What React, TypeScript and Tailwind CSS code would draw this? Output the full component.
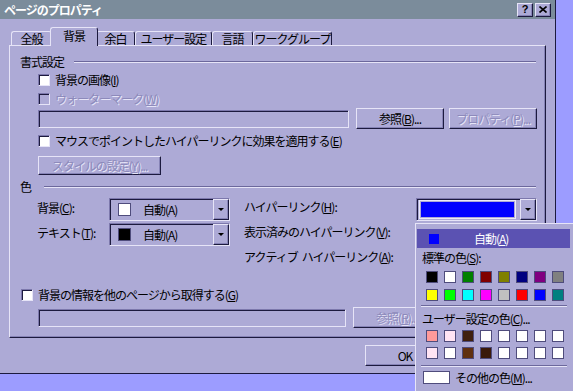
import React from 'react';

const raised =
  'border border-t-[#e6e4f7] border-l-[#e6e4f7] border-b-[#1c1a3e] border-r-[#1c1a3e] shadow-[inset_-1px_-1px_0_#8683b6]';
const sunken =
  'border border-t-[#7c78ac] border-l-[#7c78ac] border-b-[#e6e4f7] border-r-[#e6e4f7] shadow-[inset_1px_1px_0_#1c1a3e]';
const dimText = 'text-[#8d8abb] [text-shadow:1px_1px_0_#e6e4f7]';
const etched = 'h-[2px] border-t border-t-[#6c689c] border-b border-b-[#e6e4f7]';

const U = ({ c }: { c: string }) => <span className="underline underline-offset-[1px]">{c}</span>;

const Check = ({ disabled }: { disabled?: boolean }) => (
  <span className={`block w-[12px] h-[12px] shrink-0 ${sunken} ${disabled ? 'bg-[#adaad6]' : 'bg-white'}`} />
);

const Btn = ({ className, disabled, children }: { className: string; disabled?: boolean; children: React.ReactNode }) => (
  <div className={`flex items-center justify-center shrink-0 ${raised} ${disabled ? dimText : ''} ${className}`}>
    {children}
  </div>
);

const Tab = ({ className, children }: { className: string; children: React.ReactNode }) => (
  <div
    className={`h-[14px] flex items-center justify-center border-t border-l border-r border-t-[#e6e4f7] border-l-[#e6e4f7] border-r-[#1c1a3e] rounded-t-[3px] ${className}`}
  >
    {children}
  </div>
);

const Combo = ({ className, children }: { className: string; children: React.ReactNode }) => (
  <div className={`flex h-[23px] shrink-0 ${sunken} ${className}`}>
    <div className="flex-1 flex items-center">{children}</div>
    <div className={`w-[16px] flex items-center justify-center ${raised}`}>
      <span className="block w-0 h-0 border-l-[3px] border-r-[3px] border-t-[3px] border-l-transparent border-r-transparent border-t-black" />
    </div>
  </div>
);

const Swatch = ({ color }: { color: string }) => (
  <span className="block w-[12px] h-[12px] border border-[#4f4c7c]" style={{ background: color }} />
);

const standard = [
  '#000000', '#ffffff', '#008000', '#800000', '#808000', '#000080', '#800080', '#808080',
  '#ffff00', '#00ff00', '#00ffff', '#ff00ff', '#c0c0c0', '#ff0000', '#0000ff', '#008080',
];
const custom = [
  '#ff9a9a', '#ffe4f4', '#40200e', '#ffffff', '#ffffff', '#ffffff', '#ffffff', '#ffffff',
  '#ffe4f4', '#ffffff', '#603010', '#3a1a0a', '#ffffff', '#ffffff', '#ffffff', '#ffffff',
];

export default function App() {
  return (
    <div className="relative w-[573px] h-[391px] overflow-hidden bg-[#9c9cff] text-[12px] leading-none tracking-[-1px] text-black font-['Noto_Sans_CJK_JP','Noto_Sans',sans-serif]">
      {/* dialog */}
      <div className="w-[556px] h-[374px] flex flex-col bg-[#adaad6] border-r border-b border-r-[#1c1a3e] border-b-[#1c1a3e]">
        <div className="h-[19px] shrink-0 bg-[#7b8c9b] flex items-center justify-between pl-[4px] pr-[4px]">
          <span className="text-white font-bold">ページのプロパティ</span>
          <div className="flex gap-[2px]">
            <div className={`w-[16px] h-[14px] bg-[#adaad6] flex items-center justify-center font-bold text-[11px] tracking-normal font-['Liberation_Sans',sans-serif] ${raised}`}>
              ?
            </div>
            <div className={`w-[16px] h-[14px] bg-[#adaad6] flex items-center justify-center ${raised}`}>
              <svg width="8" height="7" viewBox="0 0 8 7">
                <path d="M0.5 0.5 L7.5 6.5 M7.5 0.5 L0.5 6.5" stroke="#000" strokeWidth="1.6" />
              </svg>
            </div>
          </div>
        </div>

        {/* tabs */}
        <div className="mt-[8px] h-[18px] shrink-0 flex items-end pl-[11px]">
          <Tab className="w-[41px]">全般</Tab>
          <div className="relative z-10 -mx-[2px] mb-[-1px] w-[48px] h-[19px] flex items-center justify-center pb-[2px] bg-[#adaad6] border-t border-l border-r border-t-[#e6e4f7] border-l-[#e6e4f7] border-r-[#1c1a3e] rounded-t-[3px]">
            背景
          </div>
          <Tab className="w-[39px]">余白</Tab>
          <Tab className="w-[77px]">ユーザー設定</Tab>
          <Tab className="w-[41px]">言語</Tab>
          <Tab className="w-[79px]">ワークグループ</Tab>
        </div>

        {/* panel */}
        <div className={`ml-[9px] w-[537px] h-[293px] shrink-0 flex flex-col ${raised}`}>
          <div className="mt-[9px] h-[14px] flex items-center pl-[10px] pr-[9px]">
            <span>書式設定</span>
            <div className={`ml-[10px] flex-1 ${etched}`} />
          </div>
          <div className="mt-[4px] h-[14px] flex items-center gap-[5px] pl-[28px]">
            <Check />
            <span>
              背景の画像(<U c="I" />)
            </span>
          </div>
          <div className="mt-[5px] h-[14px] flex items-center gap-[5px] pl-[28px]">
            <Check disabled />
            <span className={dimText}>
              ウォーターマーク(<U c="W" />)
            </span>
          </div>
          <div className="mt-[2px] h-[21px] flex items-center pl-[28px]">
            <div className={`w-[311px] h-[18px] ${sunken}`} />
            <Btn className="ml-[7px] w-[88px] h-[21px]">
              参照(<U c="B" />)...
            </Btn>
            <Btn disabled className="ml-[5px] w-[88px] h-[21px]">
              プロパティ(<U c="P" />)...
            </Btn>
          </div>
          <div className="mt-[5px] h-[14px] flex items-center gap-[5px] pl-[28px]">
            <Check />
            <span>
              マウスでポイントしたハイパーリンクに効果を適用する(<U c="E" />)
            </span>
          </div>
          <div className="mt-[8px] h-[19px] flex pl-[28px]">
            <Btn disabled className="w-[123px] h-[19px]">
              スタイルの設定(<U c="Y" />)...
            </Btn>
          </div>

          <div className="mt-[5px] h-[14px] flex items-center pl-[10px] pr-[9px]">
            <span>色</span>
            <div className={`ml-[13px] flex-1 ${etched}`} />
          </div>

          <div className="mt-[4px] flex pl-[27px]">
            <div className="flex flex-col gap-[2px]">
              <div className="flex">
                <span className="w-[72px] pt-[4px]">
                  背景(<U c="C" />):
                </span>
                <Combo className="w-[121px]">
                  <span className="ml-[8px] block w-[13px] h-[13px] bg-white border border-[#4f4c7c]" />
                  <span className="ml-[12px]">自動(A)</span>
                </Combo>
              </div>
              <div className="flex">
                <span className="w-[72px] pt-[4px]">
                  テキスト(<U c="T" />):
                </span>
                <Combo className="w-[121px]">
                  <span className="ml-[8px] block w-[13px] h-[13px] bg-black border border-[#4f4c7c]" />
                  <span className="ml-[12px]">自動(A)</span>
                </Combo>
              </div>
            </div>
            <div className="ml-[14px] w-[293px] flex flex-col">
              <div className="flex justify-between">
                <span className="pt-[3px]">
                  ハイパーリンク(<U c="H" />):
                </span>
                <Combo className="w-[121px]">
                  <div className="ml-[2px] w-[97px] h-[19px] border border-[#eceaf8] p-[1px]">
                    <div className="w-full h-full bg-[#0000ff]" />
                  </div>
                </Combo>
              </div>
              <span className="mt-[5px]">
                表示済みのハイパーリンク(<U c="V" />):
              </span>
              <span className="mt-[13px] flex">
                <span>アクティブ</span>
                <span className="ml-[4px]">
                  ハイパーリンク(<U c="A" />):
                </span>
              </span>
            </div>
          </div>

          <div className="mt-[25px] h-[14px] flex items-center gap-[5px] pl-[11px]">
            <Check />
            <span>
              背景の情報を他のページから取得する(<U c="G" />)
            </span>
          </div>
          <div className="mt-[5px] h-[21px] flex items-center pl-[28px]">
            <div className={`w-[308px] h-[18px] ${sunken}`} />
            <Btn disabled className="ml-[7px] w-[88px] h-[21px]">
              参照(<U c="R" />)...
            </Btn>
          </div>
        </div>

        <div className="mt-[7px] flex pl-[365px]">
          <Btn className="w-[80px] h-[21px]">OK</Btn>
        </div>
      </div>

      {/* colour picker drop-down */}
      <div className="absolute left-[415px] top-[223px] w-[160px] h-[170px] flex flex-col bg-[#adaad6] border-t border-l border-[#e6e4f7]">
        <div className="mt-[5px] ml-[1px] w-[153px] h-[19px] flex items-center bg-[#5b52b2] text-white">
          <span className="ml-[12px] block w-[10px] h-[10px] bg-[#0000ff]" />
          <span className="ml-[35px]">
            自動(<U c="A" />)
          </span>
        </div>
        <div className="mt-[3px] h-[14px] flex items-center pl-[6px]">
          標準の色(<U c="S" />):
        </div>
        <div className="mt-[6px] ml-[10px] grid grid-cols-[repeat(8,12px)] gap-[6px]">
          {standard.map((c, i) => (
            <Swatch key={i} color={c} />
          ))}
        </div>
        <div className={`mt-[4px] ml-[5px] w-[146px] ${etched}`} />
        <div className="mt-[5px] h-[14px] flex items-center pl-[6px]">
          ユーザー設定の色(<U c="C" />)...
        </div>
        <div className="mt-[4px] ml-[10px] grid grid-cols-[repeat(8,12px)] gap-x-[6px] gap-y-[5px]">
          {custom.map((c, i) => (
            <Swatch key={i} color={c} />
          ))}
        </div>
        <div className={`mt-[6px] ml-[5px] w-[146px] ${etched}`} />
        <div className="mt-[4px] ml-[7px] flex items-center">
          <span className="block w-[27px] h-[13px] bg-white border border-[#4f4c7c]" />
          <span className="ml-[5px]">
            その他の色(<U c="M" />)...
          </span>
        </div>
      </div>
    </div>
  );
}
